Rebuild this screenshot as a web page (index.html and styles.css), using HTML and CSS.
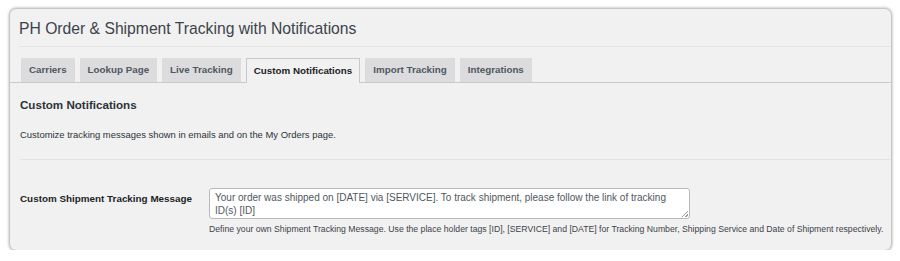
FILE: index.html
```html
<!DOCTYPE html>
<html>
<head>
<meta charset="utf-8">
<link rel="stylesheet" href="styles.css">
</head>
<body>
<div class="card">
  <h1 class="title">PH Order &amp; Shipment Tracking with Notifications</h1>
  <div class="tabs">
    <span class="tab">Carriers</span>
    <span class="tab">Lookup Page</span>
    <span class="tab">Live Tracking</span>
    <span class="tab active">Custom Notifications</span>
    <span class="tab">Import Tracking</span>
    <span class="tab">Integrations</span>
  </div>
  <div class="content">
    <h2 class="section">Custom Notifications</h2>
    <p class="desc">Customize tracking messages shown in emails and on the My Orders page.</p>
    <div class="sep"></div>
    <div class="row">
      <div class="label">Custom Shipment Tracking Message</div>
      <div class="field">
        <div class="textarea">Your order was shipped on [DATE] via [SERVICE]. To track shipment, please follow the link of tracking ID(s) [ID]<span class="grip"></span></div>
        <p class="help">Define your own Shipment Tracking Message. Use the place holder tags [ID], [SERVICE] and [DATE] for Tracking Number, Shipping Service and Date of Shipment respectively.</p>
      </div>
    </div>
  </div>
</div>
</body>
</html>
```
FILE: styles.css
```css
* { box-sizing: border-box; }
body {
  margin: 0;
  background: #fff;
  font-family: "Liberation Sans", Arial, sans-serif;
  color: #1d2327;
}
.card {
  margin: 9px 0 0 10px;
  width: 881px;
  height: 241px;
  background: #f1f1f1;
  border-radius: 6px;
  box-shadow: 0 0 3px 1px rgba(0,0,0,0.35);
  overflow: hidden;
}
.title {
  margin: 0 0 0 9px;
  padding-top: 8px;
  height: 38px;
  font-size: 15.7px;
  font-weight: 400;
  color: #3c434a;
  border-bottom: 1px solid #e4e4e4;
  line-height: 24px;
}
.tabs {
  display: flex;
  gap: 5px;
  margin-top: 11px;
  padding-left: 11px;
  border-bottom: 1px solid #c9c9cb;
  height: 25px;
}
.tab {
  height: 24px;
  padding: 0 8px;
  background: #dcdcde;
  color: #50575e;
  font-size: 9.8px;
  font-weight: 700;
  line-height: 24px;
  white-space: nowrap;
}
.tab.active {
  background: #f1f1f1;
  color: #1d2327;
  border: 1px solid #c9c9cb;
  border-bottom: none;
  height: 25px;
  line-height: 23px;
  padding: 0 7px;
}
.content {
  padding-left: 10px;
}
.section {
  margin: 14px 0 0;
  font-size: 11.6px;
  font-weight: 700;
  line-height: 16px;
  color: #2c3338;
}
.desc {
  margin: 16px 0 0;
  font-size: 9.45px;
  line-height: 12px;
  color: #2c3338;
}
.sep {
  margin-top: 18px;
  height: 1px;
  background: #e4e4e4;
}
.row {
  display: flex;
  margin-top: 28px;
}
.label {
  width: 189px;
  padding-top: 4px;
  font-size: 9.87px;
  font-weight: 700;
  line-height: 14px;
  color: #1d2327;
}
.field { display: flex; flex-direction: column; }
.textarea {
  position: relative;
  width: 481px;
  height: 31px;
  background: #fff;
  border: 1px solid #b9b9bc;
  border-radius: 3px;
  padding: 2px 5px;
  font-size: 10px;
  line-height: 13px;
  color: #50575e;
}
.grip {
  position: absolute;
  right: 1px;
  bottom: 1px;
  width: 6px;
  height: 6px;
  background: linear-gradient(135deg, transparent 45%, #999 45%, #999 55%, transparent 55%, transparent 75%, #999 75%, #999 85%, transparent 85%);
}
.help {
  margin: 5px 0 0;
  font-size: 8.68px;
  line-height: 11px;
  color: #3c434a;
  white-space: nowrap;
}
```
